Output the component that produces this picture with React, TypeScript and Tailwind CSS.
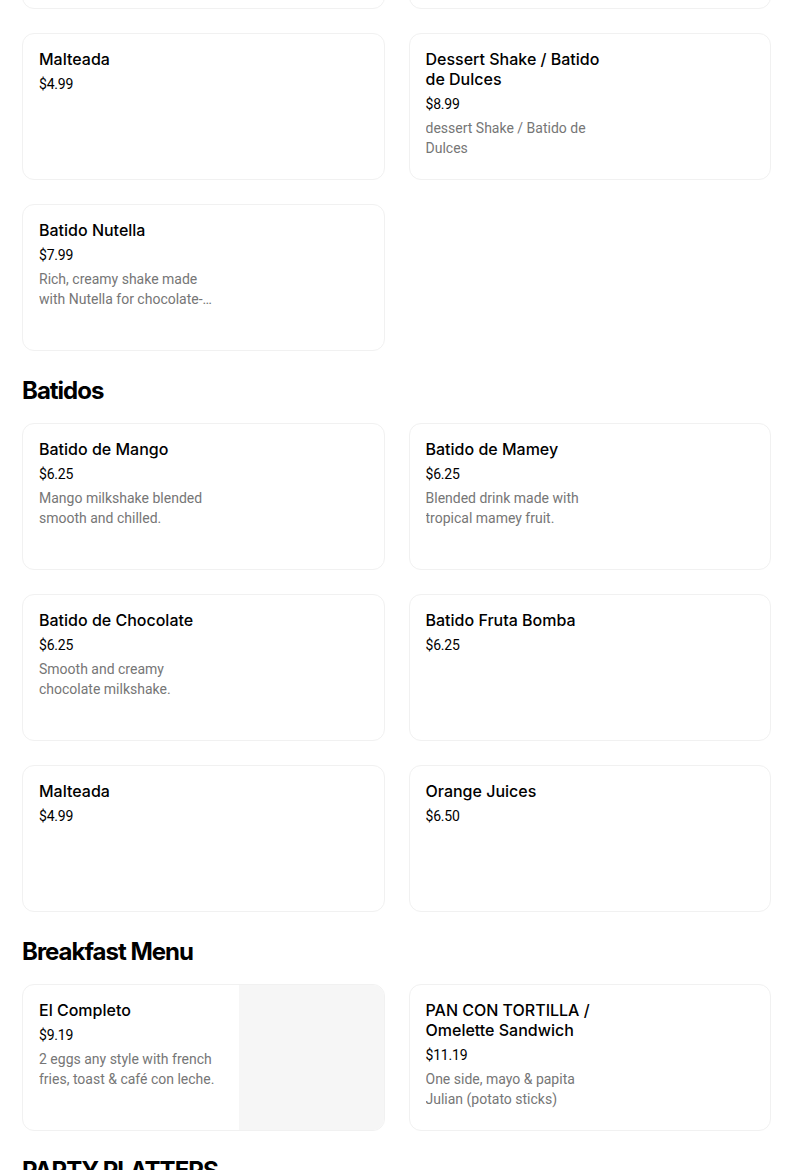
import React from "react";

type Item = { name: string; price: string; desc?: string; image?: boolean };
type Section = { title?: string; items: Item[] };

const sections: Section[] = [
  {
    items: [
      { name: "", price: "" },
      { name: "", price: "" },
      { name: "Malteada", price: "$4.99" },
      { name: "Dessert Shake / Batido de Dulces", price: "$8.99", desc: "dessert Shake / Batido de Dulces" },
      {
        name: "Batido Nutella",
        price: "$7.99",
        desc: "Rich, creamy shake made with Nutella for chocolate-hazelnut lovers.",
      },
    ],
  },
  {
    title: "Batidos",
    items: [
      { name: "Batido de Mango", price: "$6.25", desc: "Mango milkshake blended smooth and chilled." },
      { name: "Batido de Mamey", price: "$6.25", desc: "Blended drink made with tropical mamey fruit." },
      { name: "Batido de Chocolate", price: "$6.25", desc: "Smooth and creamy chocolate milkshake." },
      { name: "Batido Fruta Bomba", price: "$6.25" },
      { name: "Malteada", price: "$4.99" },
      { name: "Orange Juices", price: "$6.50" },
    ],
  },
  {
    title: "Breakfast Menu",
    items: [
      {
        name: "El Completo",
        price: "$9.19",
        desc: "2 eggs any style with french fries, toast & café con leche.",
        image: true,
      },
      {
        name: "PAN CON TORTILLA / Omelette Sandwich",
        price: "$11.19",
        desc: "One side, mayo & papita Julian (potato sticks)",
      },
    ],
  },
  { title: "PARTY PLATTERS", items: [] },
];

function ItemCard({ item }: { item: Item }) {
  return (
    <div className="flex h-[147px] overflow-hidden rounded-[12px] border border-[#f1f1f1] bg-white">
      {item.name && (
        <div className="w-[216px] shrink-0 px-4 pt-[15px]">
          <div className="text-[16px] font-medium leading-5 text-black">{item.name}</div>
          <div className="mt-[5px] font-['Roboto'] text-[14px] leading-5 tracking-[-0.2px] text-black">
            {item.price}
          </div>
          {item.desc && (
            <div className="mt-1 line-clamp-2 font-['Roboto'] text-[14px] leading-5 text-[#767676]">
              {item.desc}
            </div>
          )}
        </div>
      )}
      <div className="flex-1" />
      {item.image && <div className="w-[146px] shrink-0 bg-[#f6f6f6]" />}
    </div>
  );
}

export default function App() {
  return (
    <div
      className="h-[1170px] overflow-hidden bg-white"
      style={{ fontFamily: "Inter, 'Liberation Sans', sans-serif" }}
    >
      <div className="-mt-[138px] w-[793px] px-[22px]">
        {sections.map((section, i) => (
          <div key={i}>
            {section.title && (
              <h2 className="mt-6 mb-4 h-8 text-[24px] font-bold leading-8 tracking-[-1px] text-black">
                {section.title}
              </h2>
            )}
            {section.items.length > 0 && (
              <div className="grid grid-cols-2 gap-6">
                {section.items.map((item, j) => (
                  <ItemCard key={j} item={item} />
                ))}
              </div>
            )}
          </div>
        ))}
      </div>
    </div>
  );
}
